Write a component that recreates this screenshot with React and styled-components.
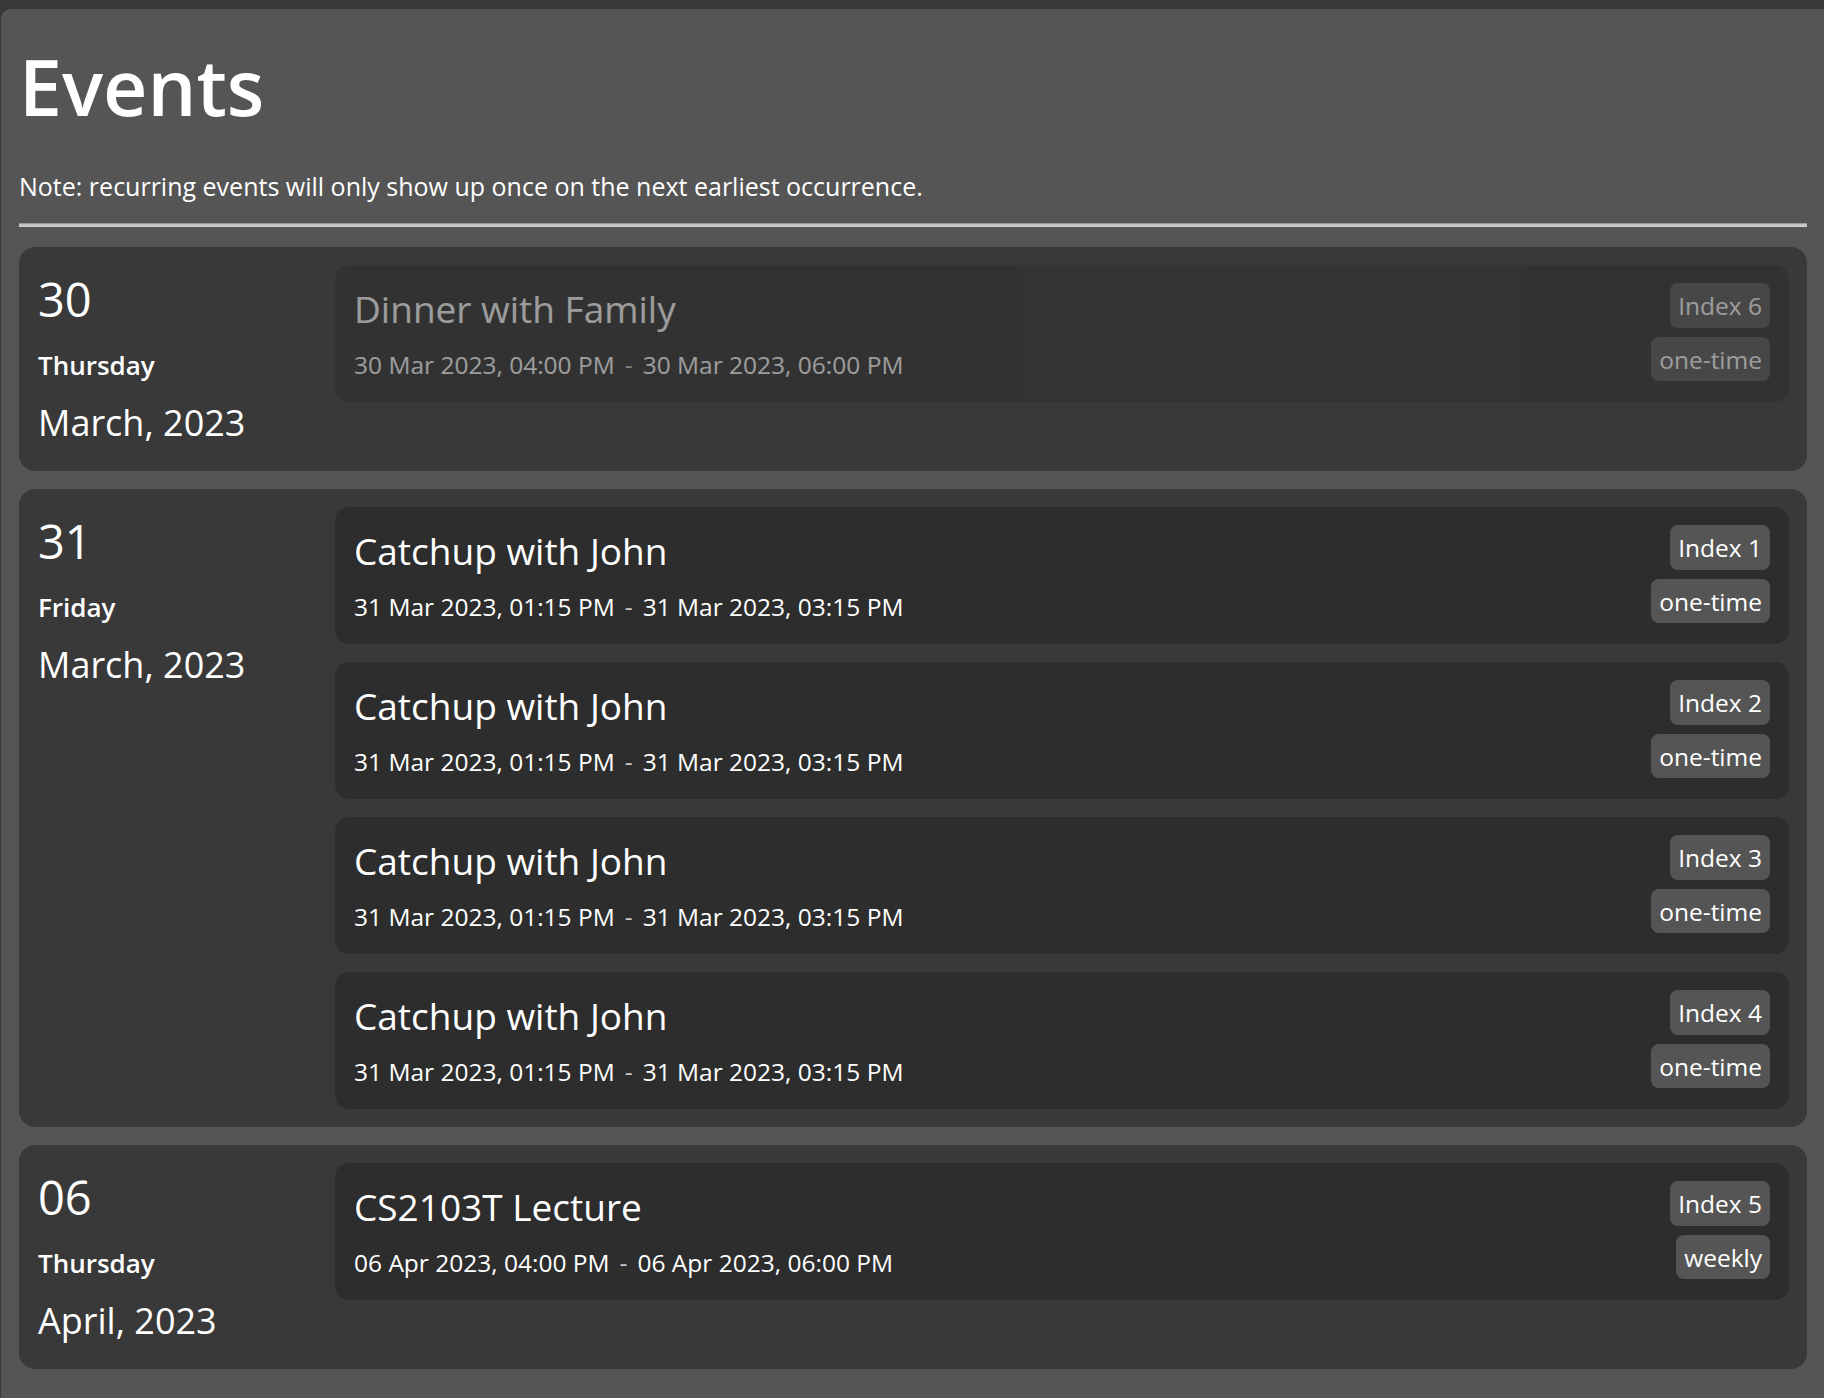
import React from 'react';
import styled, { createGlobalStyle, css } from 'styled-components';

const GlobalStyle = createGlobalStyle`
  html, body {
    margin: 0;
    padding: 0;
    background: #383838;
    overflow: hidden;
  }
  body {
    padding: 9px 0 0 1px;
    font-family: 'Open Sans', 'Noto Sans', sans-serif;
    color: #ffffff;
  }
`;

const GROUPS = [
  {
    day: '30',
    weekday: 'Thursday',
    month: 'March, 2023',
    past: true,
    events: [
      {
        title: 'Dinner with Family',
        start: '30 Mar 2023, 04:00 PM',
        end: '30 Mar 2023, 06:00 PM',
        index: 6,
        recur: 'one-time',
      },
    ],
  },
  {
    day: '31',
    weekday: 'Friday',
    month: 'March, 2023',
    events: [1, 2, 3, 4].map(i => ({
      title: 'Catchup with John',
      start: '31 Mar 2023, 01:15 PM',
      end: '31 Mar 2023, 03:15 PM',
      index: i,
      recur: 'one-time',
    })),
  },
  {
    day: '06',
    weekday: 'Thursday',
    month: 'April, 2023',
    events: [
      {
        title: 'CS2103T Lecture',
        start: '06 Apr 2023, 04:00 PM',
        end: '06 Apr 2023, 06:00 PM',
        index: 5,
        recur: 'weekly',
      },
    ],
  },
];

const App = () => {
  return (
    <>
      <GlobalStyle />
      <Panel>
        <Title>Events</Title>
        <Note>
          Note: recurring events will only show up once on the next earliest
          occurrence.
        </Note>
        <Divider />
        <GroupList>
          {GROUPS.map(group => (
            <DayGroup key={group.day + group.month}>
              <DateColumn>
                <DayNumber>{group.day}</DayNumber>
                <Weekday>{group.weekday}</Weekday>
                <MonthYear>{group.month}</MonthYear>
              </DateColumn>
              <EventList>
                {group.events.map(ev => (
                  <EventCard key={ev.index} past={group.past}>
                    <EventInfo>
                      <EventTitle>{ev.title}</EventTitle>
                      <EventTime>
                        {ev.start}
                        <Dash>-</Dash>
                        {ev.end}
                      </EventTime>
                    </EventInfo>
                    <Badges>
                      <Badge>Index {ev.index}</Badge>
                      <Badge>{ev.recur}</Badge>
                    </Badges>
                  </EventCard>
                ))}
              </EventList>
            </DayGroup>
          ))}
        </GroupList>
      </Panel>
    </>
  );
};

export default App;

const Panel = styled.div`
  width: 1824px;
  min-height: 1400px;
  box-sizing: border-box;
  padding: 39px 18px 18px 18px;
  background: #555555;
  border-top-left-radius: 10px;
`;

const Title = styled.h1`
  margin: 0;
  font-size: 77px;
  font-weight: 600;
  line-height: 1;
`;

const Note = styled.p`
  margin: 49px 0 0 0;
  font-size: 25px;
  line-height: 1;
`;

const Divider = styled.div`
  margin-top: 24px;
  height: 2px;
  background: #c4c4c4;
  border-top: 1px solid #9a9a9a;
  border-bottom: 1px solid #d0d0d0;
`;

const GroupList = styled.div`
  margin-top: 20px;
  display: flex;
  flex-direction: column;
  gap: 18px;
`;

const DayGroup = styled.div`
  display: grid;
  grid-template-columns: 280px 1fr;
  gap: 18px;
  padding: 18px;
  background: #393939;
  border-radius: 16px;
`;

const DateColumn = styled.div`
  display: flex;
  flex-direction: column;
  padding: 11px 0 12px 1px;
`;

const DayNumber = styled.div`
  font-size: 47px;
  line-height: 1;
`;

const Weekday = styled.div`
  margin-top: 29px;
  font-size: 26px;
  font-weight: 600;
  line-height: 1;
`;

const MonthYear = styled.div`
  margin-top: 27px;
  font-size: 36px;
  line-height: 1;
`;

const EventList = styled.div`
  display: flex;
  flex-direction: column;
  gap: 18px;
`;

const EventCard = styled.div`
  display: flex;
  justify-content: space-between;
  align-items: flex-start;
  min-height: 137px;
  box-sizing: border-box;
  padding: 18px 19px 18px 19px;
  background: #2d2d2d;
  border-radius: 14px;

  ${props =>
    props.past &&
    css`
      opacity: 0.5;
    `}
`;

const EventInfo = styled.div`
  display: flex;
  flex-direction: column;
  padding-top: 7px;
`;

const EventTitle = styled.div`
  font-size: 37px;
  line-height: 1;
`;

const EventTime = styled.div`
  margin-top: 26px;
  font-size: 24.5px;
  line-height: 1;
`;

const Dash = styled.span`
  margin: 0 10px;
  color: #cccccc;
`;

const Badges = styled.div`
  display: flex;
  flex-direction: column;
  align-items: flex-end;
  gap: 9px;
`;

const Badge = styled.span`
  padding: 11px 8px 9px 8px;
  font-size: 24.5px;
  line-height: 1;
  background: #555555;
  border-radius: 8px;
`;
